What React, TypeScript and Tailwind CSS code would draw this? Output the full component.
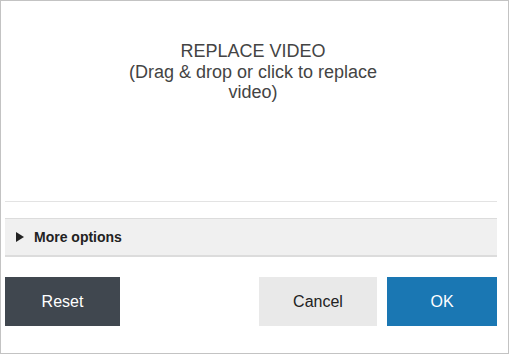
import React from "react";

export default function App() {
  return (
    <div className="w-[509px] h-[354px] border border-[#c3c3c3] bg-white flex flex-col pl-[4px] pr-[11px] font-['Liberation_Sans',Arial,sans-serif]">
      <div className="h-[200px] pt-[40px] flex justify-center mr-[-4px] cursor-pointer">
        <div className="w-[280px] text-center text-[18px] leading-[1.15] text-[#444444]">
          REPLACE VIDEO
          <br />
          (Drag &amp; drop or click to replace video)
        </div>
      </div>
      <div className="h-px bg-[#e3e3e3]" />
      <div className="mt-[16px] h-[39px] border-t border-t-[#dcdcdc] border-b-2 border-b-[#dcdcdc] bg-[#f0f0f0] flex items-center pl-[11px]">
        <svg width="8" height="10" viewBox="0 0 8 10" className="block">
          <polygon points="0,0 8,5 0,10" fill="#222222" />
        </svg>
        <span className="ml-[10px] text-[14px] font-bold text-[#222222]">More options</span>
      </div>
      <div className="mt-[20px] flex h-[49px]">
        <button className="w-[115px] h-full bg-[#40474f] text-white text-[16px]">Reset</button>
        <button className="ml-auto w-[118px] h-full bg-[#e9e9e9] text-[#222222] text-[16px]">Cancel</button>
        <button className="ml-[10px] w-[110px] h-full bg-[#1a77b3] text-white text-[16px]">OK</button>
      </div>
    </div>
  );
}
